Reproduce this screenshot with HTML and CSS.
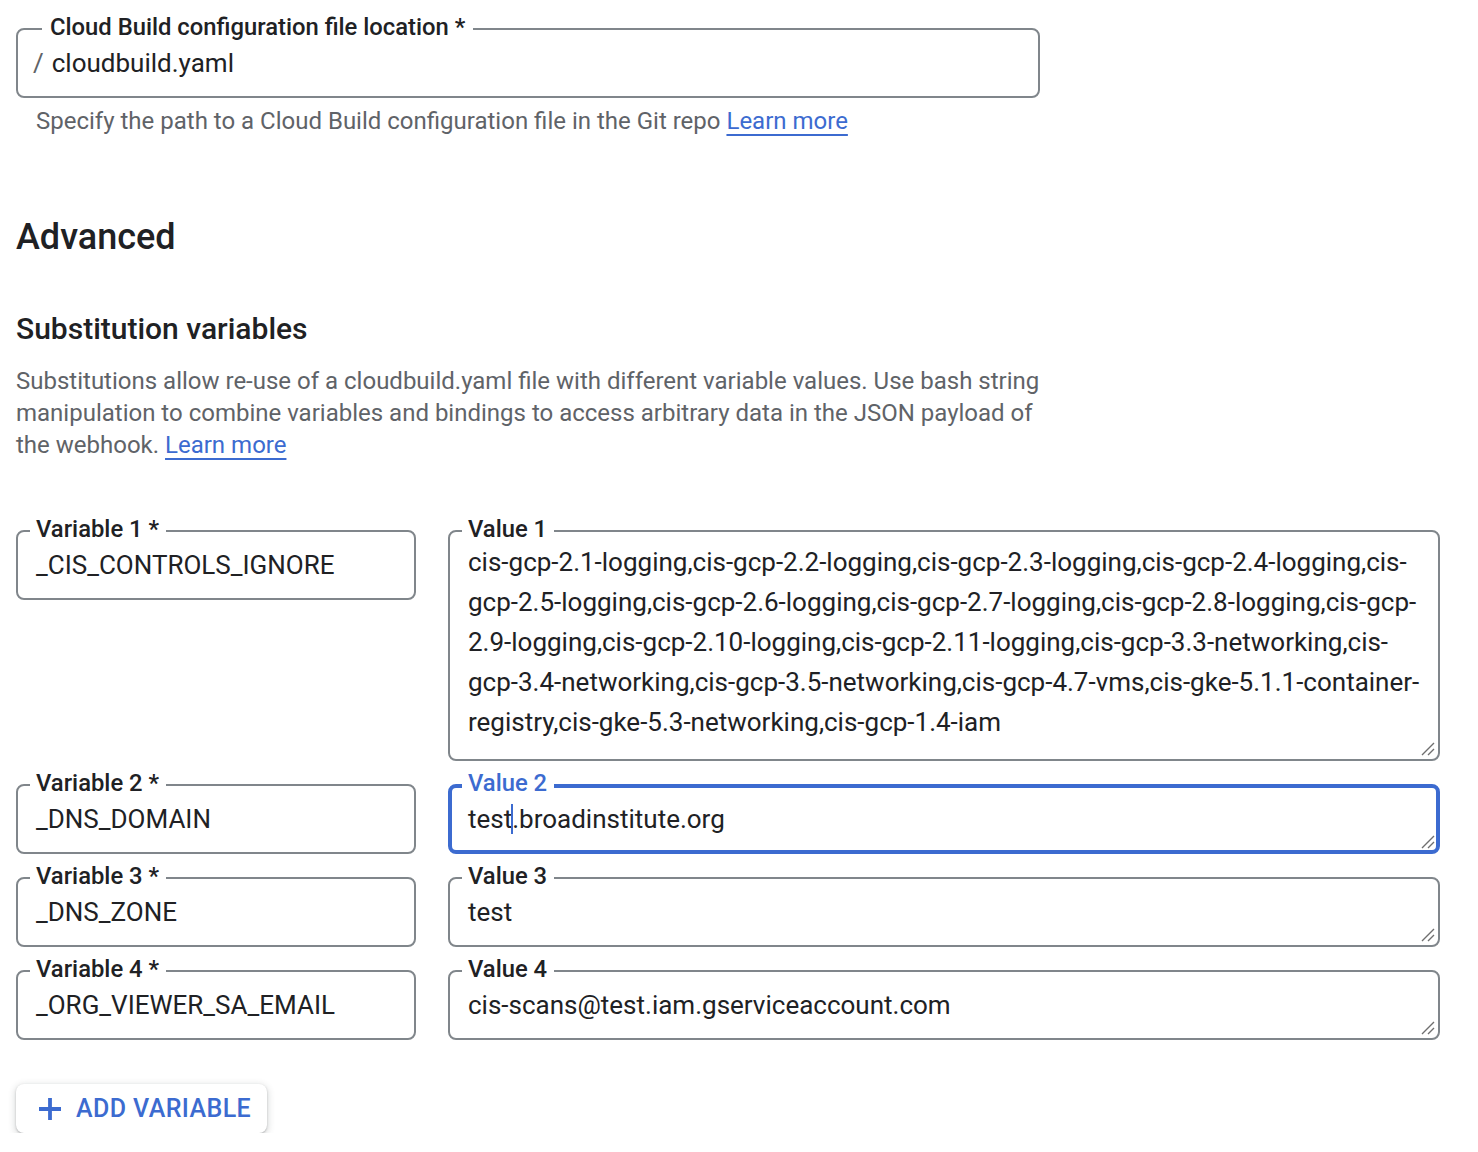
FILE: index.html
```html
<!DOCTYPE html>
<html>
<head>
<meta charset="utf-8">
<link rel="stylesheet" href="styles.css">
</head>
<body>
<main class="page">
  <div class="field field-wide">
    <span class="label label-prefixed">Cloud Build configuration file location *</span>
    <span class="prefix">/</span>
    <span class="input-text">cloudbuild.yaml</span>
  </div>
  <p class="helper">Specify the path to a Cloud Build configuration file in the Git repo <a class="link" href="#">Learn more</a></p>

  <h1 class="h-advanced">Advanced</h1>
  <h2 class="h-sub">Substitution variables</h2>
  <p class="desc">Substitutions allow re-use of a cloudbuild.yaml file with different variable values. Use bash string manipulation to combine variables and bindings to access arbitrary data in the JSON payload of the webhook. <a class="link" href="#">Learn more</a></p>

  <div class="vars">
    <div class="field">
      <span class="label">Variable 1 *</span>
      <span class="input-text">_CIS_CONTROLS_IGNORE</span>
    </div>
    <div class="field field-area field-tall">
      <span class="label">Value 1</span>
      <div class="area-text">cis-gcp-2.1-logging,cis-gcp-2.2-logging,cis-gcp-2.3-logging,cis-gcp-2.4-logging,cis-gcp-2.5-logging,cis-gcp-2.6-logging,cis-gcp-2.7-logging,cis-gcp-2.8-logging,cis-gcp-2.9-logging,cis-gcp-2.10-logging,cis-gcp-2.11-logging,cis-gcp-3.3-networking,cis-gcp-3.4-networking,cis-gcp-3.5-networking,cis-gcp-4.7-vms,cis-gke-5.1.1-container-registry,cis-gke-5.3-networking,cis-gcp-1.4-iam</div>
      <svg class="grip" width="16" height="16" viewBox="0 0 16 16"><path d="M2 14 L14 2 M8 14 L14 8" stroke="#6f6f6f" stroke-width="1.4" fill="none"/></svg>
    </div>

    <div class="field">
      <span class="label">Variable 2 *</span>
      <span class="input-text">_DNS_DOMAIN</span>
    </div>
    <div class="field field-area field-focus">
      <span class="label">Value 2</span>
      <span class="input-text">test<span class="caret"></span>.broadinstitute.org</span>
      <svg class="grip" width="16" height="16" viewBox="0 0 16 16"><path d="M2 14 L14 2 M8 14 L14 8" stroke="#6f6f6f" stroke-width="1.4" fill="none"/></svg>
    </div>

    <div class="field">
      <span class="label">Variable 3 *</span>
      <span class="input-text">_DNS_ZONE</span>
    </div>
    <div class="field field-area">
      <span class="label">Value 3</span>
      <span class="input-text">test</span>
      <svg class="grip" width="16" height="16" viewBox="0 0 16 16"><path d="M2 14 L14 2 M8 14 L14 8" stroke="#6f6f6f" stroke-width="1.4" fill="none"/></svg>
    </div>

    <div class="field">
      <span class="label">Variable 4 *</span>
      <span class="input-text">_ORG_VIEWER_SA_EMAIL</span>
    </div>
    <div class="field field-area">
      <span class="label">Value 4</span>
      <span class="input-text">cis-scans@test.iam.gserviceaccount.com</span>
      <svg class="grip" width="16" height="16" viewBox="0 0 16 16"><path d="M2 14 L14 2 M8 14 L14 8" stroke="#6f6f6f" stroke-width="1.4" fill="none"/></svg>
    </div>
  </div>

  <button class="add-btn" type="button">
    <svg class="plus" width="24" height="24" viewBox="0 0 24 24"><path d="M12 1 V23 M1 12 H23" stroke="#3c6bd0" stroke-width="3.8" fill="none"/></svg>
    <span>ADD VARIABLE</span>
  </button>
</main>
</body>
</html>
```

FILE: styles.css
```css
* { box-sizing: border-box; }

html, body {
  margin: 0;
  padding: 0;
  background: #ffffff;
}

body {
  font-family: Roboto, "Noto Sans", "Liberation Sans", sans-serif;
  color: #202124;
}

.page {
  padding: 28px 0 0 16px;
  width: 1460px;
}

.field {
  position: relative;
  height: 70px;
  border: 2px solid #80868b;
  border-radius: 8px;
  display: flex;
  align-items: center;
  padding: 0 18px;
  background: #fff;
}

.field-wide {
  width: 1024px;
  height: 70px;
  padding-left: 15px;
}

.label {
  position: absolute;
  top: -18px;
  left: 12px;
  padding: 0 7px 0 6px;
  background: #fff;
  font-size: 23.8px;
  line-height: 30px;
  font-weight: 500;
  color: #202124;
  white-space: nowrap;
}

.label-prefixed {
  left: 24px;
  padding: 0 8px;
}

.prefix {
  font-size: 26px;
  color: #5f6368;
  margin-right: 8px;
}

.input-text {
  font-size: 26px;
  line-height: 34px;
  color: #202124;
  white-space: nowrap;
}

.helper {
  margin: 7px 0 0 20px;
  font-size: 24px;
  line-height: 32px;
  color: #5f6368;
}

.link {
  color: #3c6bd0;
  text-decoration: underline;
  text-decoration-thickness: 2px;
  text-underline-offset: 5px;
}

.h-advanced {
  margin: 76px 0 0 0;
  font-size: 36px;
  line-height: 48px;
  font-weight: 500;
  color: #202124;
}

.h-sub {
  margin: 50px 0 0 0;
  font-size: 30px;
  line-height: 36px;
  font-weight: 500;
  color: #202124;
}

.desc {
  margin: 18px 0 0 0;
  width: 1045px;
  font-size: 24px;
  line-height: 32px;
  color: #5f6368;
}

.vars {
  margin-top: 69px;
  width: 1424px;
  display: grid;
  grid-template-columns: 400px 992px;
  column-gap: 32px;
  row-gap: 23px;
  align-items: start;
}

.field-tall {
  height: 231px;
  align-items: flex-start;
  padding-right: 14px;
}

.area-text {
  font-size: 26px;
  line-height: 40px;
  padding-top: 10px;
  color: #202124;
  word-break: normal;
}

.grip {
  position: absolute;
  right: 2px;
  bottom: 2px;
}

.field-focus {
  border: 4px solid #3c6bd0;
  padding: 0 16px;
}

.field-focus .label {
  top: -20px;
  left: 10px;
  color: #3c6bd0;
}

.field-focus .grip {
  right: 0;
  bottom: 0;
}

.caret {
  display: inline-block;
  width: 2px;
  height: 30px;
  background: #3c6bd0;
  vertical-align: -6px;
  margin: 0 -1px;
}

.add-btn {
  margin-top: 44px;
  display: flex;
  align-items: center;
  gap: 14px;
  height: 49px;
  padding: 0 16px 0 22px;
  border: none;
  border-radius: 8px;
  background: #fff;
  box-shadow: 0 1px 2px rgba(60,64,67,0.3), 0 2px 6px 2px rgba(60,64,67,0.15);
  font-family: Roboto, "Noto Sans", "Liberation Sans", sans-serif;
  font-size: 25px;
  font-weight: 500;
  color: #3c6bd0;
  letter-spacing: 0.4px;
}

.plus {
  display: block;
}
```
